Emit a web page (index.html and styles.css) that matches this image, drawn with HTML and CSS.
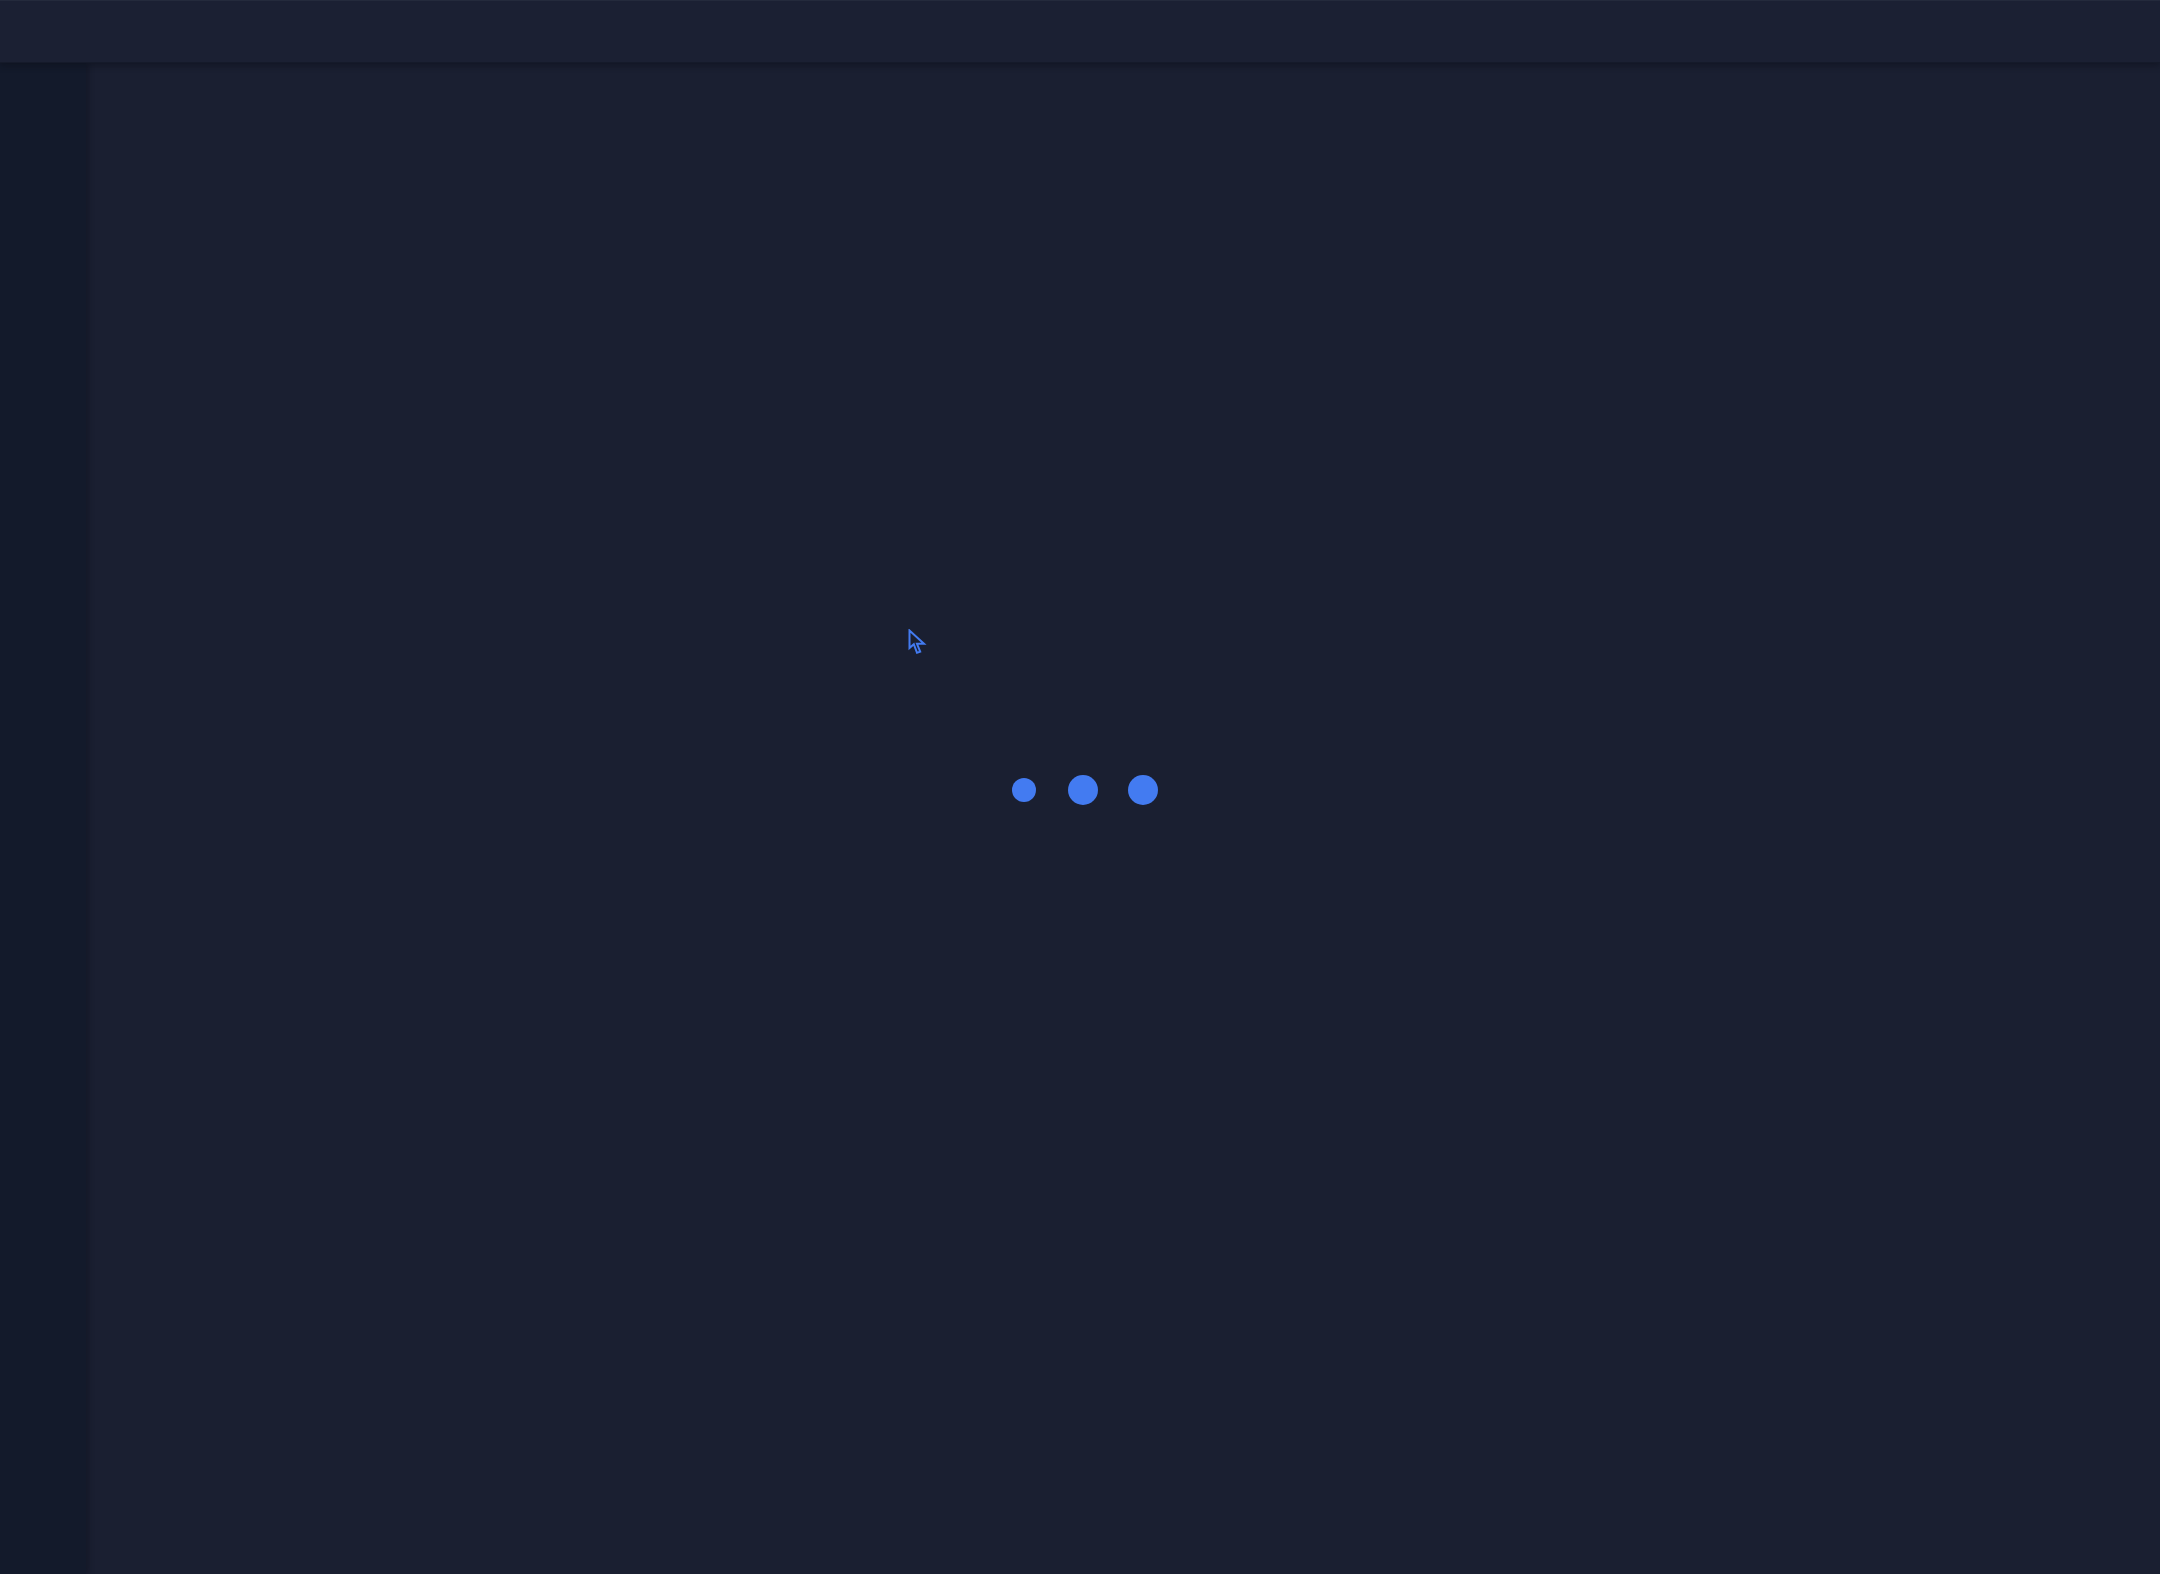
FILE: index.html
```html
<!DOCTYPE html>
<html lang="en">
<head>
<meta charset="utf-8">
<title>Loading</title>
<link rel="stylesheet" href="styles.css">
</head>
<body>
<div class="app">
  <header class="topbar"></header>
  <div class="body">
    <aside class="sidebar"></aside>
    <main class="main"></main>
  </div>
</div>
<div class="loader">
  <span class="dot dot-sm"></span>
  <span class="dot"></span>
  <span class="dot"></span>
</div>
<svg class="cursor" width="20" height="28" viewBox="0 0 20 28">
  <path d="M1.5 1.5 L1.5 19 L5.8 15.2 L9 23.8 L12.2 22.6 L9 14.8 L16 14.8 Z" fill="#1a1f31" stroke="#437bf1" stroke-width="2" stroke-linejoin="miter"/>
</svg>
</body>
</html>
```
FILE: styles.css
```css
html, body {
  margin: 0;
  padding: 0;
  height: 100%;
  background: #1a1f31;
  font-family: "Inter", "Liberation Sans", sans-serif;
  overflow: hidden;
}
.app {
  display: flex;
  flex-direction: column;
  height: 100vh;
}
.topbar {
  height: 61px;
  flex: 0 0 auto;
  background: #1b2033;
  border-top: 1px solid #242a3c;
  border-bottom: 1px solid #151a2a;
  box-shadow: 0 3px 6px rgba(10, 13, 24, 0.45);
  position: relative;
  z-index: 2;
}
.body {
  display: flex;
  flex: 1;
  min-height: 0;
}
.sidebar {
  width: 86px;
  flex: 0 0 auto;
  background: #131a2b;
  box-shadow: 2px 0 6px rgba(10, 13, 24, 0.45);
  position: relative;
  z-index: 1;
}
.main {
  flex: 1;
  background: #1a1f31;
}
.loader {
  position: fixed;
  left: 8px;
  top: 6px;
  right: 0;
  bottom: 0;
  display: flex;
  align-items: center;
  justify-content: center;
  gap: 30px;
  z-index: 5;
}
.dot {
  width: 30px;
  height: 30px;
  border-radius: 50%;
  background: #437bf1;
}
.dot-sm {
  width: 24px;
  height: 24px;
  margin-right: 2px;
  margin-left: 2px;
}
.cursor {
  position: fixed;
  left: 908px;
  top: 629px;
  z-index: 6;
}
```
